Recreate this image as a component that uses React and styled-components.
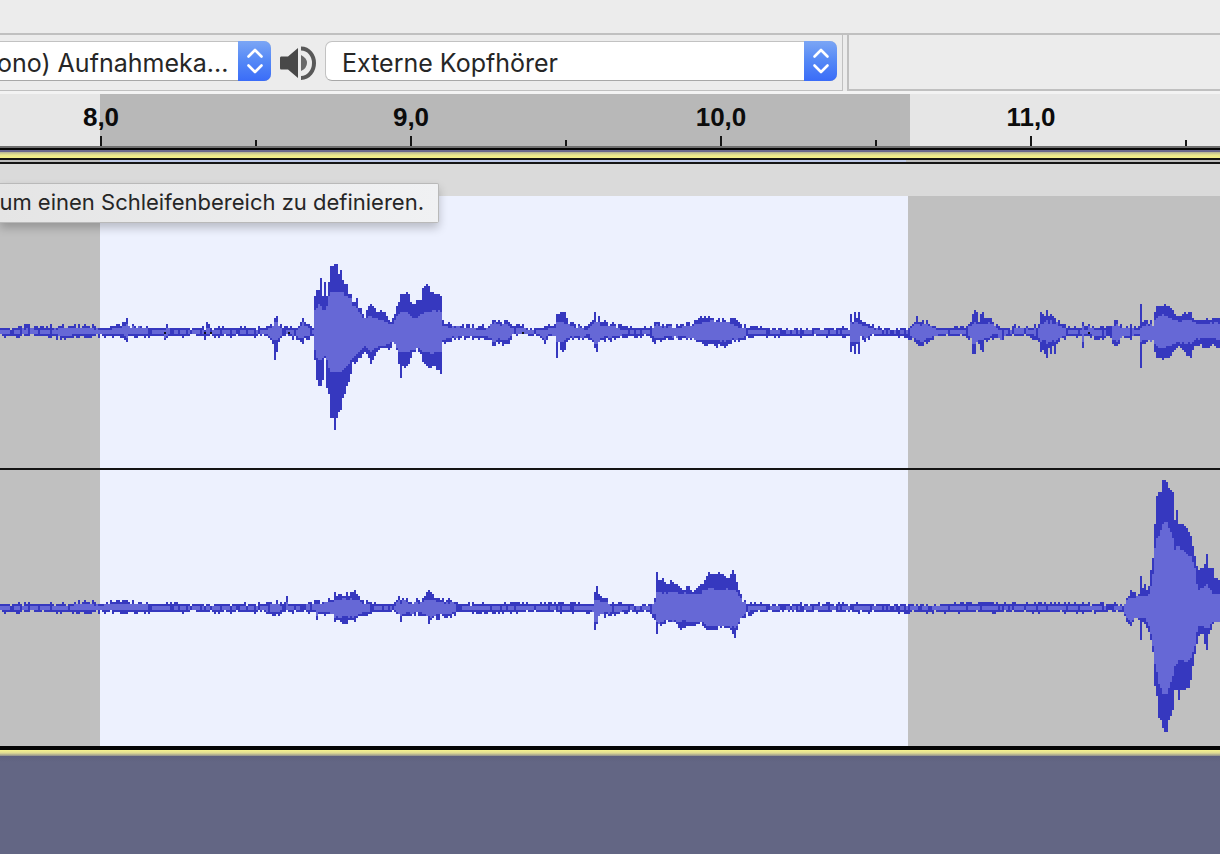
import React from "react";
import styled, { createGlobalStyle } from "styled-components";

const GlobalStyle = createGlobalStyle`
  *, *::before, *::after { box-sizing: border-box; }
  html, body, #root { height: 100%; }
  body {
    margin: 0;
    background: #636684;
    font-family: Inter, "Liberation Sans", sans-serif;
    color: #262626;
    overflow: hidden;
  }
`;

const Window = styled.div`
  display: flex;
  flex-direction: column;
  min-height: 100%;
  overflow: hidden;
`;

const ToolDock = styled.header`
  background: #ececec;
  padding-top: 33px;
  border-bottom: 3px solid #f3f3f3;
`;

const DeviceBar = styled.div`
  display: flex;
  height: 58px;
  gap: 4px;
  border-top: 2px solid #c0c0c0;
`;

const DeviceGroup = styled.div`
  display: flex;
  gap: 8px;
  padding: 6px 5px 9px 0;
  border-right: 1px solid #c0c0c0;
  border-bottom: 1px solid #c0c0c0;
`;

const EmptyDock = styled.div`
  flex: 1;
  border-left: 2px solid #c0c0c0;
  border-bottom: 2px solid #c0c0c0;
`;

const SelectBox = styled.div`
  position: relative;
  width: ${(p) => p.$width}px;
  height: 40px;
`;

const DeviceSelect = styled.select`
  appearance: none;
  display: block;
  width: 100%;
  height: 40px;
  margin: 0;
  padding: 4px 32px 0 ${(p) => (p.$cut ? 0 : 16)}px;
  text-indent: ${(p) => (p.$cut ? -3 : 0)}px;
  border: 1px solid #c2c2c2;
  border-bottom-color: #a8a8a8;
  border-left-width: ${(p) => (p.$cut ? 0 : 1)}px;
  border-radius: ${(p) => (p.$cut ? "0 7px 7px 0" : "7px")};
  background: #fff;
  color: #262626;
  font-family: Inter, "Liberation Sans", sans-serif;
  font-size: 25px;
  line-height: 34px;
`;

const Stepper = styled.span`
  position: absolute;
  top: 0;
  right: 0;
  display: grid;
  place-items: center;
  width: 33px;
  height: 40px;
  border-radius: 0 7px 7px 0;
  background: linear-gradient(#7ba6f5, #5488f6 50%, #3a6cf8);
  pointer-events: none;
`;

const SpeakerIcon = styled.svg`
  width: 38px;
  height: 40px;
  flex: none;
`;

const Ruler = styled.div`
  display: flex;
  height: 52px;
  padding-left: 24px;
  overflow: hidden;
  background: linear-gradient(90deg, #e6e6e6 100px, #b8b8b8 100px 910px, #e6e6e6 910px);
`;

const Mark = styled.div`
  display: flex;
  flex: none;
  flex-direction: column;
  align-items: center;
  justify-content: space-between;
  width: ${(p) => (p.$major ? 154 : 156)}px;
  padding-top: 8px;
  font: bold 26px/30px "Liberation Sans", Arial, sans-serif;
  color: #0c0c0c;

  &::after {
    content: "";
    width: 2px;
    height: ${(p) => (p.$major ? 10 : 6)}px;
    margin-top: auto;
    background: #161616;
  }
`;

const TrackTopEdge = styled.div`
  height: 18px;
  background:
    linear-gradient(90deg, #bcbcbc 100px, #bfcae8 100px 906px, #bcbcbc 906px) 0 14px / 100% 2px no-repeat,
    linear-gradient(#6f6f6f 2px, #050505 2px 4px, #68668c 4px 6px, #b4b294 6px, #e8e58d 9px, #f4f08a 12px, #141414 12px);
`;

const TrackTitle = styled.div`
  position: relative;
  height: 32px;
  background: #dadada;
`;

const Tooltip = styled.div`
  position: absolute;
  z-index: 1;
  top: 19px;
  left: 0;
  display: flex;
  justify-content: flex-end;
  width: 439px;
  padding: 0 14px 2px 0;
  border: 1px solid #b9b9b9;
  border-left: 0;
  border-radius: 0 2px 2px 0;
  background: linear-gradient(90deg, #e5e5e5, #f0f1f3);
  box-shadow: 0 5px 10px rgba(0, 0, 0, 0.22);
  font-size: 22px;
  line-height: 36px;
  white-space: nowrap;
`;

const Channel = styled.section`
  height: ${(p) => p.$height}px;
  background: linear-gradient(90deg, #c0c0c0 100px, #edf1fe 100px 908px, #c0c0c0 908px);
  border-bottom: ${(p) => p.$line}px solid ${(p) => (p.$line > 2 ? "#050505" : "#141414")};
`;

const Wave = styled.svg`
  display: block;
  width: 100%;
  height: 100%;
`;

const TrackBottomEdge = styled.div`
  height: 6px;
  background: linear-gradient(#f6f28c, #dedb93 3px, #8f8e8c);
`;

const Workspace = styled.main`
  flex: 1;
  background: linear-gradient(#5d607e, #636684 6px);
`;

// Envelope points: x, peak above, peak below, average above, average below
const FIRST = [
  [0, 4, 4], [20, 4, 4], [28, 6, 4], [38, 5, 4], [50, 5, 5], [65, 6, 6], [78, 6, 5], [90, 6, 5], [98, 4, 4],
  [108, 4, 4], [118, 6, 5], [124, 7, 5], [127, 12, 10], [129, 7, 5], [148, 6, 5], [152, 4, 4], [163, 4, 4],
  [165, 4, 9], [168, 8, 5], [171, 4, 4], [203, 4, 4], [205, 4, 10], [207, 8, 4], [212, 4, 4], [266, 4, 4],
  [270, 7, 7], [273, 8, 10], [275, 15, 28, 9, 9], [277, 15, 20, 9, 9], [279, 8, 8], [283, 5, 4], [290, 5, 4],
  [298, 4, 8], [303, 12, 9], [307, 7, 6], [313, 5, 4],
  [315, 36, 28, 22, 18], [317, 41, 48, 24, 26], [319, 41, 54, 27, 28], [321, 54, 54, 26, 28], [323, 36, 48, 22, 26],
  [325, 50, 26, 22, 24], [327, 36, 55, 26, 28], [329, 50, 61, 36, 36], [331, 66, 85, 40, 40], [333, 66, 86, 40, 40],
  [335, 68, 98, 40, 40], [337, 68, 86, 40, 40], [339, 58, 80, 40, 40], [341, 62, 77, 40, 40], [343, 52, 65, 40, 38],
  [345, 48, 61, 36, 36], [347, 48, 53, 36, 34], [349, 40, 50, 34, 32], [351, 38, 43, 33, 29], [353, 30, 31, 27, 26],
  [355, 29, 30, 26, 24], [357, 34, 30, 24, 23], [359, 25, 26, 20, 20], [361, 25, 26, 18, 18], [363, 18, 20, 15, 15],
  [366, 15, 18, 14, 15], [368, 25, 22, 14, 15], [370, 28, 28, 15, 20], [372, 27, 33, 15, 20], [374, 25, 26, 14, 17],
  [378, 18, 18, 13, 15], [380, 21, 18, 12, 14], [384, 20, 17, 11, 14], [390, 12, 16, 9, 12], [394, 13, 11, 9, 10],
  [397, 25, 18, 16, 16], [399, 30, 33, 18, 20], [401, 38, 44, 20, 20], [403, 38, 35, 20, 20], [405, 40, 35, 20, 20],
  [409, 38, 31, 18, 20], [412, 28, 21, 14, 17], [417, 30, 18, 14, 17], [421, 33, 22, 17, 18], [423, 43, 30, 19, 20],
  [427, 48, 35, 20, 20], [429, 45, 34, 20, 20], [431, 39, 36, 21, 21], [435, 39, 36, 21, 21], [439, 37, 37, 21, 21],
  [441, 37, 42, 20, 20], [443, 10, 10, 6, 8],
  [450, 7, 8], [470, 6, 6], [485, 5, 6], [490, 8, 8], [494, 14, 14], [500, 10, 10], [508, 11, 13], [512, 5, 4],
  [523, 7, 2], [526, 4, 4], [540, 4, 4], [545, 5, 11], [548, 6, 5], [555, 7, 6], [557, 18, 26, 10, 10],
  [559, 16, 10, 10, 10], [562, 20, 19, 10, 10], [566, 20, 18, 9, 9], [568, 10, 8], [575, 7, 6], [582, 6, 9],
  [588, 5, 4], [591, 10, 9], [593, 12, 12], [595, 20, 15, 10, 12], [597, 12, 19, 10, 12], [599, 16, 12], [601, 9, 9], [605, 9, 8], [615, 8, 6],
  [625, 5, 5], [650, 4, 4], [656, 10, 10, 7, 7], [660, 8, 8], [675, 6, 7], [690, 8, 7], [700, 13, 12, 9, 8],
  [708, 15, 12, 11, 8], [715, 12, 13, 11, 8], [725, 12, 16, 11, 9], [733, 13, 10, 8, 7], [740, 7, 9], [750, 5, 4],
  [770, 4, 5], [800, 3, 4], [849, 4, 4], [851, 18, 20, 10, 10], [853, 11, 12, 9, 9], [855, 20, 20, 11, 10], [857, 11, 10, 9, 9],
  [859, 20, 20, 9, 9], [861, 11, 6], [866, 7, 9], [872, 6, 4], [885, 3, 4], [905, 3, 4], [912, 6, 7],
  [916, 14, 11], [921, 10, 14], [927, 11, 10], [933, 7, 6], [942, 4, 3], [966, 5, 4], [970, 8, 8], [971, 8, 8],
  [973, 20, 22, 9, 12], [975, 22, 22, 9, 12], [977, 20, 12, 9, 9], [979, 9, 13, 7, 9], [981, 16, 18, 8, 9], [983, 18, 20, 9, 9], [985, 12, 9], [989, 13, 8], [995, 8, 5],
  [1001, 5, 9], [1006, 4, 4], [1017, 7, 4], [1030, 5, 4], [1039, 6, 8], [1041, 20, 20, 9, 10], [1043, 20, 18, 9, 9], [1045, 14, 22, 10, 9],
  [1047, 22, 26, 11, 11], [1049, 16, 15, 9, 9], [1051, 18, 22, 12, 10], [1053, 18, 15, 9, 9], [1055, 12, 22, 9, 9], [1057, 13, 12], [1061, 8, 8], [1070, 4, 4], [1081, 4, 4],
  [1083, 8, 14], [1085, 5, 4], [1090, 7, 4], [1097, 4, 7], [1110, 5, 6], [1117, 11, 15], [1122, 6, 6],
  [1130, 6, 6], [1139, 5, 4], [1141, 26, 38, 4, 11], [1143, 12, 12, 6, 8], [1147, 12, 10, 7, 8], [1153, 8, 10, 9, 9],
  [1156, 25, 25, 13, 13], [1159, 26, 26, 16, 15], [1165, 28, 28, 17, 16], [1172, 22, 22, 14, 13], [1178, 15, 14, 10, 11],
  [1184, 18, 20, 12, 11], [1191, 20, 24, 12, 11], [1196, 10, 10, 8, 7], [1203, 12, 14, 8, 6], [1212, 14, 14, 9, 7],
  [1222, 11, 15, 8, 7],
];

const SECOND = [
  [0, 4, 4], [70, 4, 4], [78, 6, 5], [92, 6, 5], [98, 4, 4], [110, 6, 4], [125, 6, 5], [148, 6, 5], [155, 4, 4],
  [180, 5, 4], [190, 3, 4], [262, 4, 4], [275, 6, 7], [285, 5, 4], [287, 9, 4], [289, 4, 4], [305, 4, 3],
  [315, 6, 5], [317, 6, 11], [319, 6, 6], [325, 7, 6], [333, 9, 9, 6, 6], [335, 15, 13, 8, 9], [345, 13, 16, 9, 9],
  [355, 17, 11, 9, 9], [362, 7, 7], [375, 4, 4], [395, 4, 4], [399, 11, 8], [401, 6, 13], [404, 11, 7], [408, 6, 6],
  [420, 7, 7], [425, 11, 8], [429, 17, 13, 8, 9], [434, 12, 11, 7, 8], [442, 7, 8], [452, 8, 8], [460, 4, 4],
  [480, 4, 5], [500, 4, 5], [520, 5, 4], [560, 5, 4], [590, 4, 5], [593, 4, 6], [595, 16, 22, 8, 14],
  [597, 24, 15, 8, 14], [600, 10, 7], [605, 8, 8], [612, 5, 6], [625, 4, 4], [650, 3, 4], [655, 8, 10],
  [657, 36, 26, 15, 15], [659, 27, 17, 16, 15], [664, 30, 14, 15, 13], [668, 22, 14, 15, 12], [672, 28, 13, 16, 13],
  [677, 24, 18, 15, 13], [682, 18, 22, 14, 13], [688, 21, 17, 15, 13], [694, 16, 19, 13, 14], [700, 22, 15, 15, 14],
  [705, 27, 19, 18, 16], [708, 35, 22, 20, 18], [714, 34, 22, 19, 19], [719, 35, 19, 18, 18], [725, 31, 20, 19, 18],
  [731, 32, 22, 19, 19], [733, 37, 28, 19, 19], [736, 32, 30, 17, 20], [738, 19, 15, 15, 14], [743, 9, 9, 7, 8],
  [748, 4, 6], [755, 4, 4], [800, 4, 3], [870, 4, 4], [920, 3, 4], [975, 5, 4], [1050, 5, 4], [1090, 4, 4],
  [1124, 4, 4], [1126, 8, 12, 7, 9], [1131, 17, 16, 10, 13], [1137, 14, 12, 12, 10], [1139, 14, 12, 12, 10],
  [1141, 31, 34, 12, 11], [1143, 20, 14, 11, 11], [1145, 24, 15, 11, 11], [1148, 16, 24, 12, 16],
  [1150, 32, 27, 18, 20], [1152, 40, 36, 26, 30], [1153, 50, 44, 34, 38], [1155, 83, 78, 60, 56], [1157, 112, 88, 70, 65],
  [1159, 115, 110, 72, 75], [1161, 115, 112, 78, 80], [1163, 127, 120, 84, 86], [1165, 128, 124, 86, 86],
  [1167, 126, 123, 86, 86], [1169, 120, 112, 80, 80], [1171, 118, 108, 76, 74], [1173, 115, 102, 70, 68], [1174, 84, 82, 56, 58],
  [1177, 98, 82, 62, 56], [1179, 84, 92, 62, 52], [1181, 84, 82, 58, 52], [1185, 82, 81, 56, 54], [1190, 75, 79, 52, 52],
  [1192, 68, 65, 50, 47], [1195, 52, 46, 40, 38], [1198, 37, 28, 18, 17], [1203, 40, 25, 20, 18], [1205, 44, 34, 22, 19],
  [1207, 53, 40, 23, 20], [1209, 42, 26, 21, 20], [1213, 40, 18, 14, 14], [1215, 30, 14, 14, 14], [1222, 24, 13, 12, 12],
];

const STEP = 2;
const snap = (v) => Math.round(v / STEP) * STEP;
const noise = (n, seed) => {
  const s = Math.sin(n * 12.9898 + seed * 78.233) * 43758.5453;
  return s - Math.floor(s);
};
const average = (peak) => (peak <= 5 ? 2 : Math.min(peak * 0.7, 10));

function roughness(peak, x, seed) {
  const n = noise(x, seed) - 0.5;
  if (peak <= 5) return n * 2.6;
  if (peak < 15) return n * 5;
  return peak < 45 ? n * 3 : 0;
}

function sampleEnvelope(points) {
  const full = points.map(([x, u, d, au, ad]) => [x, u, d, au ?? average(u), ad ?? average(d)]);
  const columns = [];
  let i = 0;
  const last = full[full.length - 1][0];
  for (let x = 0; x < last; x += STEP) {
    while (i < full.length - 2 && full[i + 1][0] <= x + 1) i += 1;
    const a = full[i];
    const b = full[i + 1];
    const t = Math.min(1, Math.max(0, (x + 1 - a[0]) / (b[0] - a[0])));
    const [, u, d, au, ad] = a.map((v, k) => v + (b[k] - v) * t);
    const up = Math.max(2, snap(u + roughness(u, x, 1)));
    const down = Math.max(2, snap(d + roughness(d, x, 2)));
    const closed = u < 6 && noise(x, 5) > 0.8;
    columns.push({
      x, up, down,
      innerUp: closed ? 0 : Math.min(up, snap(au + (noise(x, 3) - 0.5) * 1.6)),
      innerDown: closed ? 0 : Math.min(down, snap(ad + (noise(x, 4) - 0.5) * 1.6)),
    });
  }
  return columns;
}

const barPath = (columns, mid, top, bottom) =>
  columns.map((c) => `M${c.x} ${mid - c[top]}h2V${mid + c[bottom]}h-2z`).join("");

function Waveform({ points, mid, clicks = [], label }) {
  const columns = sampleEnvelope(points);
  return (
    <Wave role="img" aria-label={label} shapeRendering="crispEdges">
      <path fill="#3638bf" d={barPath(columns, mid, "up", "down")} />
      <path fill="#6668d6" d={barPath(columns, mid, "innerUp", "innerDown")} />
      <path fill="#10101c" d={clicks.map((x) => `M${x} ${mid}h2v2h-2z`).join("")} />
    </Wave>
  );
}

function DevicePicker({ label, value, width, cut }) {
  return (
    <SelectBox $width={width}>
      <DeviceSelect aria-label={label} $cut={cut} defaultValue={value}>
        <option value={value}>{value}</option>
      </DeviceSelect>
      <Stepper>
        <svg width="18" height="28" viewBox="0 0 18 28" fill="none" stroke="#fff" strokeWidth="2.6" strokeLinecap="round" strokeLinejoin="round">
          <path d="M2.500 9.500 9 3l6.500 6.500M2.500 18.500 9 25l6.500-6.500" />
        </svg>
      </Stepper>
    </SelectBox>
  );
}

const MARKS = ["8,0", "", "9,0", "", "10,0", "", "11,0", ""];

export default function App() {
  return (
    <>
      <GlobalStyle />
      <Window>
        <ToolDock>
          <DeviceBar>
            <DeviceGroup>
              <DevicePicker label="Aufnahmekanäle" value="ono) Aufnahmeka..." width={271} cut />
              <SpeakerIcon viewBox="0 0 38 40" aria-hidden="true">
                <path fill="#484848" d="M2 15.500Q1 15.500 1 17v10q0 1.500 1 1.500h7L19 37V7L9 15.500z" />
                <path fill="#6a6a6a" d="M22 14q6 3 6 8t-6 8z" />
                <path fill="none" stroke="#585858" strokeWidth="4" d="M22 7.500c8 0 13 7 13 14.500s-5 15-13 15" />
              </SpeakerIcon>
              <DevicePicker label="Wiedergabegerät" value="Externe Kopfhörer" width={512} />
            </DeviceGroup>
            <EmptyDock />
          </DeviceBar>
        </ToolDock>
        <Ruler>
          {MARKS.map((text, i) => (
            <Mark key={i} $major={text !== ""}>{text}</Mark>
          ))}
        </Ruler>
        <TrackTopEdge />
        <TrackTitle>
          <Tooltip role="tooltip">um einen Schleifenbereich zu definieren.</Tooltip>
        </TrackTitle>
        <Channel $height={274} $line={2}>
          <Waveform label="Linker Kanal" points={FIRST} mid={136} clicks={[164, 204, 210, 288, 522, 1088]} />
        </Channel>
        <Channel $height={280} $line={4}>
          <Waveform label="Rechter Kanal" points={SECOND} mid={138} />
        </Channel>
        <TrackBottomEdge />
        <Workspace />
      </Window>
    </>
  );
}
